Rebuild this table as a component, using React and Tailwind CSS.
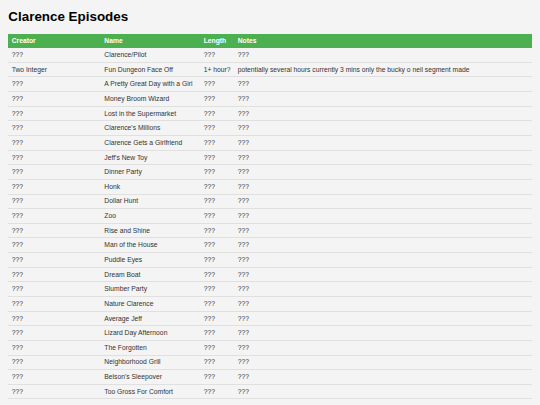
const episodes = [
  ["???", "Clarence/Pilot", "???", "???"],
  ["Two Integer", "Fun Dungeon Face Off", "1+ hour?", "potentially several hours currently 3 mins only the bucky o neil segment made"],
  ["???", "A Pretty Great Day with a Girl", "???", "???"],
  ["???", "Money Broom Wizard", "???", "???"],
  ["???", "Lost in the Supermarket", "???", "???"],
  ["???", "Clarence's Millions", "???", "???"],
  ["???", "Clarence Gets a Girlfriend", "???", "???"],
  ["???", "Jeff's New Toy", "???", "???"],
  ["???", "Dinner Party", "???", "???"],
  ["???", "Honk", "???", "???"],
  ["???", "Dollar Hunt", "???", "???"],
  ["???", "Zoo", "???", "???"],
  ["???", "Rise and Shine", "???", "???"],
  ["???", "Man of the House", "???", "???"],
  ["???", "Puddle Eyes", "???", "???"],
  ["???", "Dream Boat", "???", "???"],
  ["???", "Slumber Party", "???", "???"],
  ["???", "Nature Clarence", "???", "???"],
  ["???", "Average Jeff", "???", "???"],
  ["???", "Lizard Day Afternoon", "???", "???"],
  ["???", "The Forgotten", "???", "???"],
  ["???", "Neighborhood Grill", "???", "???"],
  ["???", "Belson's Sleepover", "???", "???"],
  ["???", "Too Gross For Comfort", "???", "???"],
];

function Row({ cells, header }) {
  return (
    <div
      className={
        header
          ? "flex h-[14.5px] items-center bg-[#4caf50] font-bold text-white"
          : "flex h-[14.65px] items-center border-b border-[#e0e0e0] text-[#333]"
      }
    >
      <div className="w-[92.7px] shrink-0 px-[3.33px] whitespace-nowrap">{cells[0]}</div>
      <div className="w-[99.3px] shrink-0 px-[3.33px] whitespace-nowrap">{cells[1]}</div>
      <div className="w-[34px] shrink-0 px-[3.33px] whitespace-nowrap">{cells[2]}</div>
      <div className="flex-1 px-[3.33px] whitespace-nowrap">{cells[3]}</div>
    </div>
  );
}

export default function App() {
  return (
    <div className="min-h-screen bg-[#f4f4f4] px-[8.33px] pt-[8.8px] font-['Liberation_Sans',Arial,sans-serif]">
      <h1 className="text-[13.4px] font-bold leading-[1.15] text-black">Clarence Episodes</h1>

      {/* Episode table */}
      <div className="mt-[9.4px] w-[523.5px] text-[6.75px] leading-[1.15]">
        <Row header cells={["Creator", "Name", "Length", "Notes"]} />
        {episodes.map((ep, i) => (
          <Row key={i} cells={ep} />
        ))}
      </div>
    </div>
  );
}
